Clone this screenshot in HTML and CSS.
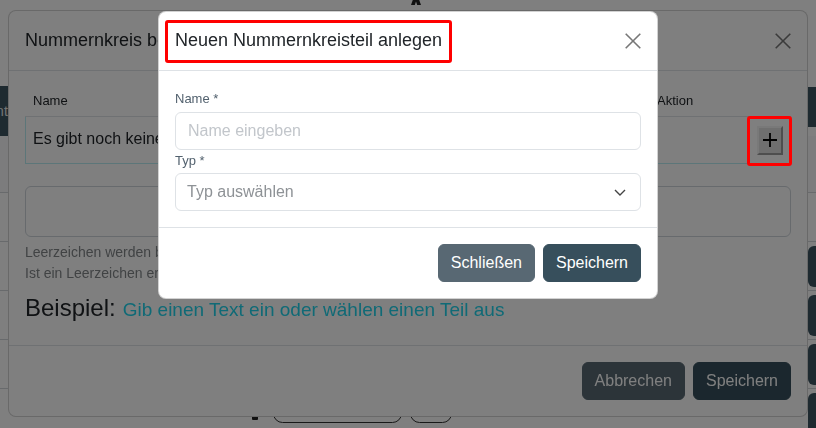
FILE: index.html
```html
<!DOCTYPE html>
<html lang="de">
<head>
<meta charset="utf-8">
<title>Nummernkreis bearbeiten</title>
<link rel="stylesheet" href="styles.css">
</head>
<body>
<div class="page">
  <div class="topbar">
    <svg class="top-icon" viewBox="0 0 12 12" width="12" height="12"><path d="M1 12 L3.5 5 H8.5 L11 12 H7.2 L6 8.5 L4.8 12 Z" fill="#222"/></svg>
  </div>
  <div class="toolbar">
    <div class="side-btn">Kontakte</div>
    <div class="side-block"></div>
  </div>
  <div class="list">
    <div class="list-head"></div>
    <div class="list-row"></div>
    <div class="list-row"><span class="row-btn"></span></div>
    <div class="list-row"><span class="row-btn"></span></div>
    <div class="list-row"><span class="row-btn"></span></div>
    <div class="list-row"><span class="pill-icon"></span><span class="pill">Dokument-Nummer</span><span class="pill pill-sm">Name</span><span class="row-btn"></span></div>
  </div>
</div>

<div class="modal modal-edit">
  <div class="modal-header">
    <h5 class="modal-title">Nummernkreis bearbeiten</h5>
    <span class="btn-close"><svg viewBox="0 0 16 16" width="16" height="16"><path d="M0.7 0.7L15.3 15.3M15.3 0.7L0.7 15.3" stroke="currentColor" stroke-width="1.6" fill="none"/></svg></span>
  </div>
  <div class="modal-body">
    <div class="parts-head">
      <div class="cell">Name</div>
      <div class="cell cell-action">Aktion</div>
    </div>
    <div class="parts-row">
      <div class="cell cell-text">Es gibt noch keine Teile</div>
      <div class="cell cell-btn"><span class="plus-btn"><svg viewBox="0 0 14 14" width="14" height="14"><path d="M7 0V14M0 7H14" stroke="#000" stroke-width="1.8" fill="none"/></svg></span></div>
    </div>
    <div class="drop-box"></div>
    <p class="helper">Leerzeichen werden beim Speichern automatisch entfernt.<br>Ist ein Leerzeichen erwünscht, nutze bitte einen Textteil.</p>
    <div class="example"><span class="example-label">Beispiel:</span><span class="example-text">Gib einen Text ein oder wählen einen Teil aus</span></div>
  </div>
  <div class="modal-footer">
    <span class="btn btn-secondary">Abbrechen</span>
    <span class="btn btn-primary">Speichern</span>
  </div>
</div>

<div class="backdrop"></div>

<div class="modal modal-new">
  <div class="modal-header">
    <h5 class="modal-title">Neuen Nummernkreisteil anlegen</h5>
    <span class="btn-close"><svg viewBox="0 0 16 16" width="16" height="16"><path d="M0.7 0.7L15.3 15.3M15.3 0.7L0.7 15.3" stroke="currentColor" stroke-width="1.6" fill="none"/></svg></span>
  </div>
  <div class="modal-body form-body">
    <label class="form-label">Name *</label>
    <input class="form-control" type="text" placeholder="Name eingeben">
    <label class="form-label">Typ *</label>
    <div class="form-select"><span>Typ auswählen</span><svg viewBox="0 0 12 7" width="12" height="7"><path d="M1 1L6 6L11 1" stroke="#444" stroke-width="1.4" fill="none"/></svg></div>
  </div>
  <div class="modal-footer">
    <span class="btn btn-secondary">Schließen</span>
    <span class="btn btn-primary">Speichern</span>
  </div>
</div>

<div class="mark mark-title"></div>
<div class="mark mark-plus"></div>
</body>
</html>
```
FILE: styles.css
```css
* { box-sizing: border-box; }
html, body { margin: 0; padding: 0; }
body {
  width: 816px;
  height: 428px;
  overflow: hidden;
  font-family: "Liberation Sans", Arial, sans-serif;
  color: #212529;
  background: #fff;
}

/* background page */
.page { height: 428px; overflow: hidden; }
.topbar { display: flow-root; height: 12px; padding-left: 410px; }
.top-icon { display: block; transform: translateY(-7px); }
.toolbar {
  display: flex;
  justify-content: space-between;
  align-items: flex-start;
  margin-top: 74px;
  height: 50px;
}
.side-btn {
  width: 140px;
  height: 50px;
  margin-left: -33px;
  padding-left: 12px;
  background: #3c5460;
  color: #e8e8e8;
  font-size: 14px;
  line-height: 50px;
  white-space: nowrap;
  overflow: hidden;
}
.side-block {
  width: 40px;
  height: 40px;
  margin-top: 1px;
  margin-right: -32px;
  background: #3c5460;
}
.list-head { height: 57px; background: #f8f9fa; border-bottom: 1px solid #d0d4d8; }
.list-row {
  height: 49px;
  border-bottom: 1px solid #d0d4d8;
  display: flex;
  align-items: center;
}
.row-btn {
  margin-left: auto;
  margin-right: -32px;
  width: 40px;
  height: 41px;
  border-radius: 6px;
  background: #3c5460;
}
.pill-icon {
  width: 6px;
  height: 14px;
  margin-left: 252px;
  margin-right: 15px;
  background: #222;
  border-radius: 1px;
}
.pill {
  height: 19px;
  border: 1px solid #333;
  border-radius: 10px;
  padding: 0 11px;
  font-size: 12px;
  line-height: 17px;
  color: #222;
  margin-right: 8px;
}
.pill-sm { padding: 0 4px; }

/* modals */
.modal {
  position: fixed;
  background: #fff;
  border: 1px solid rgba(0, 0, 0, 0.175);
  border-radius: 8px;
}
.modal-edit { top: 10px; left: 8px; width: 800px; }
.modal-new { top: 11px; left: 158px; width: 500px; }
.modal-header {
  display: flex;
  align-items: center;
  justify-content: space-between;
  padding: 0 16px;
  border-bottom: 1px solid #dee2e6;
}
.modal-edit .modal-header { height: 60px; }
.modal-new .modal-header { height: 59px; }
.modal-title {
  margin: 0;
  font-size: 18px;
  line-height: 21.6px;
  font-weight: 400;
  color: #212529;
  white-space: nowrap;
}
.btn-close { display: flex; color: #777; }
.modal-body { padding: 16px; }
.modal-footer {
  display: flex;
  justify-content: flex-end;
  padding: 12px;
  border-top: 1px solid #dee2e6;
}
.btn {
  margin: 4px;
  padding: 6px 12px;
  font-size: 16px;
  line-height: 24px;
  border: 1px solid transparent;
  border-radius: 6px;
  color: #fff;
}
.btn-secondary { background: #586873; border-color: #586873; }
.btn-primary { background: #374f5c; border-color: #374f5c; }

/* first modal body */
.parts-head, .parts-row {
  display: grid;
  grid-template-columns: 1fr 134px;
}
.parts-head {
  font-size: 13px;
  line-height: 20px;
  border-bottom: 1px solid #dee2e6;
}
.parts-head .cell { padding: 4px 8px 5px; }
.parts-head .cell-action { padding-left: 0; }
.parts-row {
  height: 47px;
  border-left: 1px solid #b8ecf2;
  border-bottom: 1px solid #b8ecf2;
}
.cell-text {
  padding: 0 7px 3px;
  display: flex;
  align-items: center;
  font-size: 16px;
  line-height: 24px;
  white-space: nowrap;
  overflow: hidden;
}
.cell-btn {
  display: flex;
  align-items: center;
  justify-content: flex-end;
  padding-right: 8px;
}
.plus-btn {
  display: flex;
  align-items: center;
  justify-content: center;
  width: 26px;
  height: 29px;
  background: #dedede;
  border: 2px solid;
  border-color: #f2f2f2 #9c9c9c #9c9c9c #f2f2f2;
}
.drop-box {
  margin-top: 22px;
  height: 51px;
  border: 1px solid #ced4da;
  border-radius: 6px;
}
.helper {
  margin: 5px 0 0;
  font-size: 14px;
  line-height: 21px;
  color: #828689;
  white-space: nowrap;
}
.example {
  display: flex;
  align-items: baseline;
  gap: 7px;
  margin: 10px 0 7px;
  height: 28px;
  line-height: 28px;
  white-space: nowrap;
}
.example-label { font-size: 24px; color: #212529; }
.example-text { font-size: 19px; color: #20d4ec; }

/* second modal form */
.form-body { padding: 18px 16px 16px; }
.form-label {
  display: block;
  font-size: 13px;
  line-height: 20px;
  margin-bottom: 2.5px;
  color: #52616e;
}
.form-control {
  display: block;
  width: 100%;
  height: 38px;
  margin: 0 0 1px;
  padding: 0 12px;
  font-family: inherit;
  font-size: 16px;
  color: #212529;
  border: 1px solid #dee2e6;
  border-radius: 6px;
  outline: none;
}
.form-control::placeholder { color: #c2c6cb; }
.form-select {
  display: flex;
  align-items: center;
  justify-content: space-between;
  height: 38px;
  padding: 0 14px 0 11px;
  font-size: 16px;
  color: #8e9296;
  border: 1px solid #dee2e6;
  border-radius: 6px;
}

.backdrop {
  position: fixed;
  inset: 0;
  background: rgba(0, 0, 0, 0.5);
}

/* annotation boxes */
.mark {
  position: absolute;
  border: 3px solid #ff0000;
  border-radius: 3px;
}
.mark-title { left: 165px; top: 20px; width: 287px; height: 43px; }
.mark-plus { left: 747px; top: 116px; width: 45px; height: 50px; }
```
